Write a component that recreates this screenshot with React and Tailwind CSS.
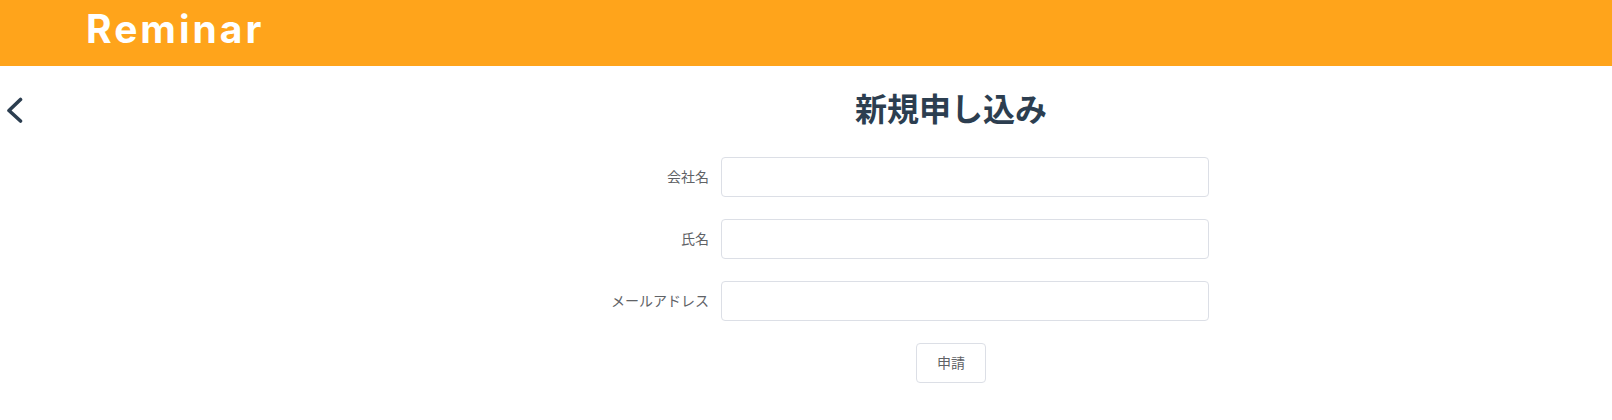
const jp = "font-['Noto_Sans_CJK_JP','Noto_Sans',sans-serif]";

const fields = ['会社名', '氏名', 'メールアドレス'];

const Field = ({ label }) => (
  <div className="flex items-center gap-3">
    <label className="w-[709px] pb-[2px] text-right text-sm text-[#606266]">{label}</label>
    <input
      type="text"
      className="h-10 w-[488px] rounded border border-[#dcdfe6] bg-white outline-none"
    />
  </div>
);

export default function App() {
  return (
    <div className={`h-[420px] overflow-hidden bg-white ${jp}`}>
      <header className="flex h-[66px] items-center bg-[#ffa41b] pb-[10px] pl-[86px]">
        <span className="font-['Inter',sans-serif] text-[39px] leading-none font-bold tracking-[3px] text-white">
          Reminar
        </span>
      </header>

      <main className="relative pt-5">
        {/* back arrow */}
        <button className="absolute top-[29px] left-[5px] text-[#2c3e50]">
          <svg width="18" height="28" viewBox="0 0 18 28" fill="none" stroke="currentColor" strokeWidth="3.6" strokeLinecap="round" strokeLinejoin="round">
            <path d="M15.5 4.5 4 15.5 15.5 26" />
          </svg>
        </button>

        <h1 className="pb-[3px] pl-[290px] text-center text-[32px] leading-[43px] font-bold text-[#2c3e50]">新規申し込み</h1>

        <form className="mt-[25px] flex flex-col gap-[22px]">
          {fields.map((f) => (
            <Field key={f} label={f} />
          ))}
          <div className="flex justify-center pl-[290px]">
            <button type="button" className="h-10 w-[70px] rounded border border-[#dcdfe6] bg-white pb-[2px] text-sm text-[#606266]">
              申請
            </button>
          </div>
        </form>
      </main>
    </div>
  );
}
